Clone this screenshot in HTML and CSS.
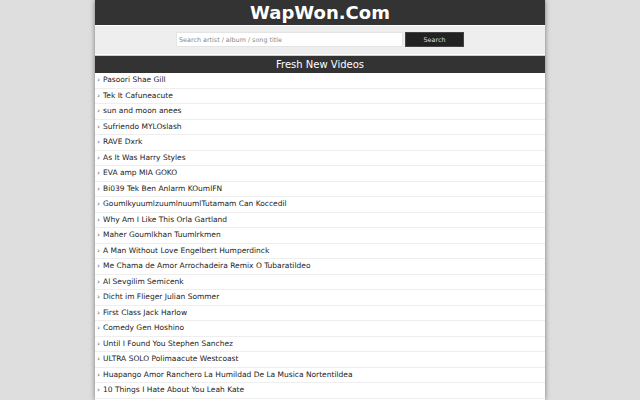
FILE: index.html
```html
<!DOCTYPE html>
<html>
<head>
<meta charset="utf-8">
<title>WapWon.Com</title>
<link rel="stylesheet" href="styles.css">
</head>
<body>
<div class="wrap">
  <div class="logo">WapWon.Com</div>
  <form class="search">
    <input class="q" type="text" placeholder="Search artist / album / song title">
    <button class="btn" type="button">Search</button>
  </form>
  <div class="head">Fresh New Videos</div>
  <ul class="list">
    <li><span class="arr">›</span>Pasoori Shae Gill</li>
    <li><span class="arr">›</span>Tek It Cafuneacute</li>
    <li><span class="arr">›</span>sun and moon anees</li>
    <li><span class="arr">›</span>Sufriendo MYLOslash</li>
    <li><span class="arr">›</span>RAVE Dxrk</li>
    <li><span class="arr">›</span>As It Was Harry Styles</li>
    <li><span class="arr">›</span>EVA amp MIA GOKO</li>
    <li><span class="arr">›</span>Bi039 Tek Ben Anlarm KOumlFN</li>
    <li><span class="arr">›</span>GoumlkyuumlzuumlnuumlTutamam Can Koccedil</li>
    <li><span class="arr">›</span>Why Am I Like This Orla Gartland</li>
    <li><span class="arr">›</span>Maher Goumlkhan Tuumlrkmen</li>
    <li><span class="arr">›</span>A Man Without Love Engelbert Humperdinck</li>
    <li><span class="arr">›</span>Me Chama de Amor Arrochadeira Remix O Tubaratildeo</li>
    <li><span class="arr">›</span>Al Sevgilim Semicenk</li>
    <li><span class="arr">›</span>Dicht im Flieger Julian Sommer</li>
    <li><span class="arr">›</span>First Class Jack Harlow</li>
    <li><span class="arr">›</span>Comedy Gen Hoshino</li>
    <li><span class="arr">›</span>Until I Found You Stephen Sanchez</li>
    <li><span class="arr">›</span>ULTRA SOLO Polimaacute Westcoast</li>
    <li><span class="arr">›</span>Huapango Amor Ranchero La Humildad De La Musica Nortentildea</li>
    <li><span class="arr">›</span>10 Things I Hate About You Leah Kate</li>
  </ul>
</div>
</body>
</html>
```
FILE: styles.css
```css
html, body {
  margin: 0;
  padding: 0;
  background: #dedede;
  font-family: "DejaVu Sans", Verdana, sans-serif;
}
.wrap {
  width: 450px;
  margin: 0 auto;
  background: #fff;
  box-shadow: 0 0 5px #777;
  min-height: 400px;
}
.logo {
  background: #333;
  color: #fff;
  font-weight: bold;
  font-size: 18px;
  line-height: 25px;
  height: 25px;
  text-align: center;
}
.search {
  margin: 0;
  background: #eee;
  border-top: 1px solid #fff;
  border-bottom: 1px solid #fff;
  padding: 6px 0;
  display: flex;
  justify-content: center;
  gap: 2px;
  height: 16px;
}
.q {
  width: 227px;
  height: 15px;
  box-sizing: border-box;
  border: 1px solid #e4e4e4;
  background: #fff;
  padding: 0 2px;
  font-family: "DejaVu Sans", sans-serif;
  font-size: 6.4px;
  outline: none;
}
.q::placeholder {
  color: #888;
}
.btn {
  width: 59px;
  height: 15px;
  box-sizing: border-box;
  background: #222;
  color: #ddd;
  border: 1px solid #444;
  font-family: "DejaVu Sans", sans-serif;
  font-size: 6.4px;
  padding: 0;
}
.head {
  background: #333;
  color: #fff;
  text-align: center;
  font-size: 10px;
  height: 17px;
  line-height: 17px;
  border-top: 1px solid #ccc;
}
.list {
  list-style: none;
  margin: 0;
  padding: 0;
}
.list li {
  font-size: 7.5px;
  line-height: 14.5px;
  color: #222;
  padding-left: 2px;
  border-bottom: 1px solid #eee;
}
.arr {
  color: #555;
  margin-right: 3px;
}
```
